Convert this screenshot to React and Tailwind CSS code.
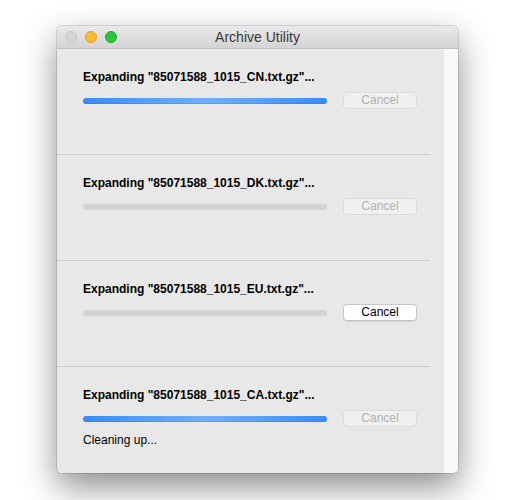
const items = [
  { name: "85071588_1015_CN.txt.gz", state: "active", cancel: false },
  { name: "85071588_1015_DK.txt.gz", state: "idle", cancel: false },
  { name: "85071588_1015_EU.txt.gz", state: "idle", cancel: true },
  { name: "85071588_1015_CA.txt.gz", state: "active", cancel: false, note: "Cleaning up..." },
];

function Progress({ active }) {
  if (!active) return <div className="h-[6px] w-[244px] rounded-full bg-[#d5d4d5]" />;
  return (
    <div className="h-[6px] w-[244px] rounded-full bg-gradient-to-r from-[#3a8cf7] via-[#70b0fb] to-[#3a8cf7] shadow-[inset_0_-1px_0_rgba(0,60,180,0.15)]" />
  );
}

function CancelButton({ enabled }) {
  return (
    <button
      className={
        enabled
          ? "h-[17px] w-[74px] rounded-[4px] border border-[#c6c6c6] bg-white text-[12px] leading-[15px] text-black shadow-[0_1px_0_rgba(0,0,0,0.08)]"
          : "h-[17px] w-[74px] rounded-[4px] border border-[#dcdbdc] bg-[#f1f0f1] text-[12px] leading-[15px] text-[#b0b0b0]"
      }
    >
      Cancel
    </button>
  );
}

function Row({ item, last }) {
  return (
    <div className={last ? "h-[106px] pl-[26px] pt-[20px]" : "h-[106px] pl-[26px] pt-[20px] mr-[13px] border-b border-[#cfcdcf]"}>
      <p className="text-[12px] font-bold leading-[16px] text-black">Expanding "{item.name}"...</p>
      <div className="mt-[7px] flex items-center gap-[16px]">
        <Progress active={item.state === "active"} />
        <CancelButton enabled={item.cancel} />
      </div>
      {item.note && <p className="mt-[6px] text-[12px] leading-[14px] text-black">{item.note}</p>}
    </div>
  );
}

export default function App() {
  return (
    <div className="h-[500px] w-[509px] bg-white pl-[57px] pt-[26px]" style={{ fontFamily: "'Liberation Sans', Arial, sans-serif" }}>
      <div className="h-[447px] w-[401px] overflow-hidden rounded-[5px] shadow-[0_14px_34px_rgba(0,0,0,0.45),0_0_0_1px_rgba(0,0,0,0.12)]">
        {/* title bar */}
        <div className="relative flex h-[23px] items-center border-b border-[#c4c2c4] bg-gradient-to-b from-[#ebe9eb] to-[#d5d3d5]">
          <div className="absolute left-[8px] top-[5px] flex gap-[8px]">
            <span className="h-[12px] w-[12px] rounded-full border border-[#c5c5c5] bg-[#d5d5d5]" />
            <span className="h-[12px] w-[12px] rounded-full border border-[#e0a024] bg-[#fdbc2e]" />
            <span className="h-[12px] w-[12px] rounded-full border border-[#1fa82e] bg-[#29c73f]" />
          </div>
          <p className="w-full text-center text-[14px] text-[#383838]">Archive Utility</p>
        </div>
        {/* body */}
        <div className="flex h-[424px]">
          <div className="w-[386px] bg-[#e9e8e9]">
            {items.map((it, i) => (
              <Row key={it.name} item={it} last={i === items.length - 1} />
            ))}
          </div>
          <div className="w-[15px] border-l border-[#e3e3e3] bg-[#f9f9f9]" />
        </div>
      </div>
    </div>
  );
}
